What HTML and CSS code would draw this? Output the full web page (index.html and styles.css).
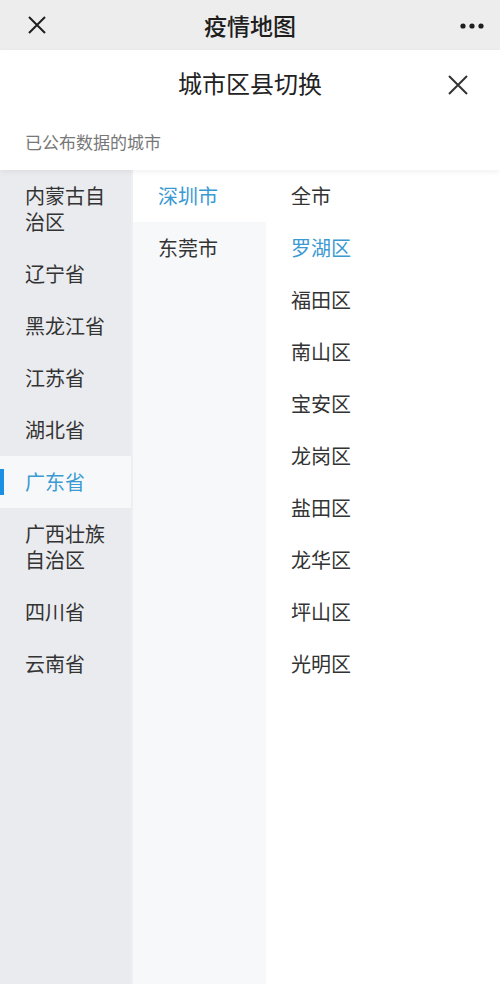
FILE: index.html
```html
<!DOCTYPE html>
<html lang="zh-CN">
<head>
  <meta charset="UTF-8">
  <title>疫情地图</title>
  <link rel="stylesheet" href="styles.css">
</head>
<body>

<div class="topbar">
  <div class="top-left">
    <svg width="18" height="18" viewBox="0 0 18 18">
      <path d="M1 1L17 17M17 1L1 17" stroke="#1e1e1e" stroke-width="2" fill="none"/>
    </svg>
  </div>
  <div class="top-title">疫情地图</div>
  <div class="top-right">
    <svg width="24" height="6" viewBox="0 0 24 6">
      <circle cx="3" cy="3" r="2.6" fill="#1e1e1e"/>
      <circle cx="12" cy="3" r="2.6" fill="#1e1e1e"/>
      <circle cx="21" cy="3" r="2.6" fill="#1e1e1e"/>
    </svg>
  </div>
</div>

<div class="panel-head">
  <div class="panel-title-row">
    <div class="panel-title">城市区县切换</div>
    <svg class="panel-close" width="20" height="20" viewBox="0 0 20 20">
      <path d="M1 1L19 19M19 1L1 19" stroke="#333" stroke-width="2" fill="none"/>
    </svg>
  </div>
  <div class="panel-sub">已公布数据的城市</div>
</div>

<div class="picker">
  <ul class="col col-province">
    <li>内蒙古自治区</li>
    <li>辽宁省</li>
    <li>黑龙江省</li>
    <li>江苏省</li>
    <li>湖北省</li>
    <li class="active">广东省</li>
    <li>广西壮族自治区</li>
    <li>四川省</li>
    <li>云南省</li>
  </ul>
  <ul class="col col-city">
    <li class="active">深圳市</li>
    <li>东莞市</li>
  </ul>
  <ul class="col col-district">
    <li>全市</li>
    <li class="active">罗湖区</li>
    <li>福田区</li>
    <li>南山区</li>
    <li>宝安区</li>
    <li>龙岗区</li>
    <li>盐田区</li>
    <li>龙华区</li>
    <li>坪山区</li>
    <li>光明区</li>
  </ul>
</div>

</body>
</html>
```

FILE: styles.css
```css
* {
  box-sizing: border-box;
}

html, body {
  height: 100%;
}

body {
  margin: 0;
  font-family: "Noto Sans CJK SC", "Noto Sans", sans-serif;
  color: #333;
  background: #fff;
  display: flex;
  flex-direction: column;
  overflow: hidden;
}

.topbar {
  height: 50px;
  background: #ededed;
  display: grid;
  grid-template-columns: 1fr auto 1fr;
  align-items: center;
  padding: 0 16px 0 28px;
  flex-shrink: 0;
}

.top-left svg,
.top-right svg {
  display: block;
}

.top-right {
  justify-self: end;
  margin-top: 1px;
}

.top-title {
  font-size: 23px;
  font-weight: 500;
  color: #1e1e1e;
  margin-left: -12px;
}

.panel-head {
  height: 120px;
  background: #fff;
  box-shadow: 0 2px 6px rgba(0,0,0,0.06);
  position: relative;
  z-index: 1;
  flex-shrink: 0;
}

.panel-title-row {
  height: 64px;
  display: flex;
  align-items: center;
  justify-content: center;
  position: relative;
}

.panel-title {
  font-size: 24px;
  color: #222;
}

.panel-close {
  position: absolute;
  right: 32px;
  top: 25px;
}

.panel-sub {
  padding: 15px 25px 0;
  font-size: 17px;
  color: #777;
}

.picker {
  flex: 1;
  display: flex;
}

.col {
  list-style: none;
  margin: 0;
  padding: 0;
  font-size: 20px;
  line-height: 26px;
}

.col li {
  padding: 13px 0;
}

.col-province {
  width: 133px;
  background: #eaebef;
  border-right: 2px solid #eeeff1;
}

.col-province li {
  padding-left: 25px;
  padding-right: 20px;
}

.col-province li.active {
  background: #f7f8fa;
  color: #3a9ad2;
  position: relative;
}

.col-province li.active::before {
  content: "";
  position: absolute;
  left: 0;
  top: 13px;
  width: 4px;
  height: 26px;
  background: #1a8fe3;
}

.col-city {
  width: 133px;
  background: #f7f8fa;
}

.col-city li {
  padding-left: 25px;
}

.col-city li.active {
  background: #fff;
  color: #3a9ad2;
}

.col-district {
  flex: 1;
  background: #fff;
}

.col-district li {
  padding-left: 25px;
}

.col-district li.active {
  color: #3a9ad2;
}
```
